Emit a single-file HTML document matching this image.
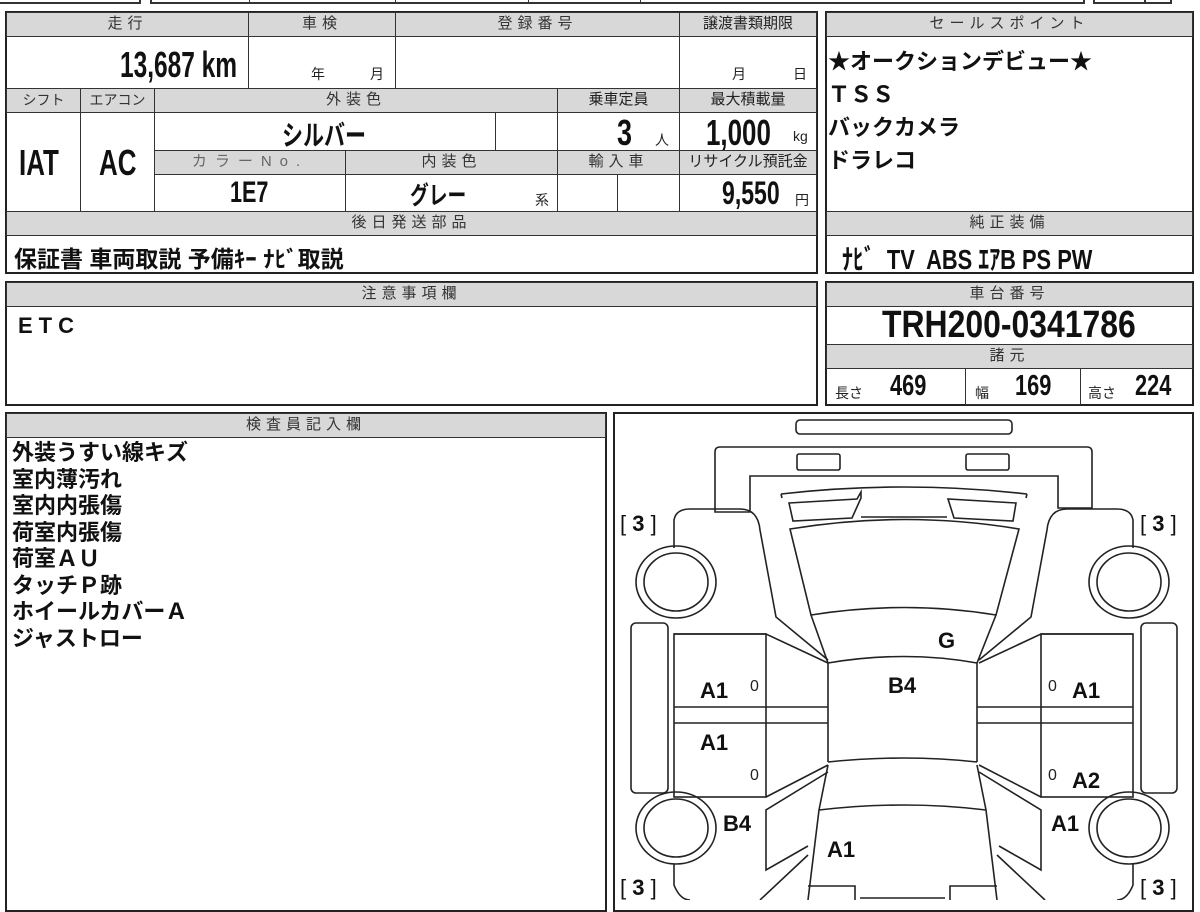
<!DOCTYPE html>
<html><head><meta charset="utf-8"><style>
body{margin:0;width:1200px;height:900px;overflow:hidden;background:#fff;position:relative;font-family:"Liberation Sans","Noto Sans CJK JP",sans-serif;}
.b{position:absolute;border:2px solid #222;box-sizing:border-box;}
.c{position:absolute;box-sizing:border-box;border:1px solid #333;}
.h{position:absolute;box-sizing:border-box;background:#d8d8d8;border:1px solid #333;color:#333;font-size:15px;text-align:center;letter-spacing:5px;line-height:22px;}
.t{position:absolute;font-weight:bold;color:#111;white-space:nowrap;}
.n{transform-origin:left top;}
.s{position:absolute;font-size:14px;color:#222;}
</style></head><body>
<div class="c" style="left:-2px;top:-5px;width:143px;height:9px;border-width:2px"></div>
<div class="c" style="left:150px;top:-5px;width:935px;height:9px;border-width:2px"></div>
<div class="c" style="left:249px;top:-5px;width:147px;height:9px"></div>
<div class="c" style="left:528px;top:-5px;width:113px;height:9px"></div>
<div class="c" style="left:1093px;top:-5px;width:79px;height:9px;border-width:2px"></div>
<div class="c" style="left:1144px;top:-5px;width:1px;height:9px"></div>

<div class="b" style="left:5px;top:11px;width:813px;height:263px"></div>
<div class="h" style="left:6px;top:12px;width:243px;height:25px">走行</div>
<div class="h" style="left:248px;top:12px;width:148px;height:25px">車検</div>
<div class="h" style="left:395px;top:12px;width:285px;height:25px">登録番号</div>
<div class="h" style="left:679px;top:12px;width:138px;height:25px;letter-spacing:0;color:#222">譲渡書類期限</div>
<div class="c" style="left:248px;top:36px;width:148px;height:53px"></div>
<div class="c" style="left:395px;top:36px;width:285px;height:53px"></div>
<div class="t n" style="left:120px;top:44px;font-size:36px;transform:scaleX(0.68)">13,687 km</div>
<div class="s" style="left:311px;top:64px">年</div><div class="s" style="left:370px;top:64px">月</div>
<div class="s" style="left:732px;top:64px">月</div><div class="s" style="left:793px;top:64px">日</div>

<div class="h" style="left:6px;top:88px;width:75px;height:25px;letter-spacing:0;font-size:14px">シフト</div>
<div class="h" style="left:80px;top:88px;width:75px;height:25px;letter-spacing:0;font-size:14px">エアコン</div>
<div class="h" style="left:154px;top:88px;width:404px;height:25px">外装色</div>
<div class="h" style="left:557px;top:88px;width:123px;height:25px;letter-spacing:0;color:#222">乗車定員</div>
<div class="h" style="left:679px;top:88px;width:138px;height:25px;letter-spacing:0;color:#222">最大積載量</div>
<div class="c" style="left:80px;top:112px;width:75px;height:100px"></div>
<div class="c" style="left:154px;top:112px;width:342px;height:39px"></div>
<div class="c" style="left:495px;top:112px;width:63px;height:39px"></div>
<div class="c" style="left:557px;top:112px;width:123px;height:39px"></div>
<div class="t n" style="left:19px;top:142px;font-size:36px;transform:scaleX(0.72)">IAT</div>
<div class="t n" style="left:99px;top:142px;font-size:36px;transform:scaleX(0.72)">AC</div>
<div class="t n" style="left:282px;top:114px;font-size:28px;transform:scaleX(0.75)">シルバー</div>
<div class="t n" style="left:617px;top:112px;font-size:36px;transform:scaleX(0.75)">3</div><div class="s" style="left:655px;top:130px">人</div>
<div class="t n" style="left:706px;top:112px;font-size:36px;transform:scaleX(0.72)">1,000</div><div class="s" style="left:793px;top:128px">kg</div>
<div class="h" style="left:154px;top:150px;width:192px;height:25px;letter-spacing:8px;color:#666">カラーNo.</div>
<div class="h" style="left:345px;top:150px;width:213px;height:25px">内装色</div>
<div class="h" style="left:557px;top:150px;width:123px;height:25px">輸入車</div>
<div class="h" style="left:679px;top:150px;width:138px;height:25px;letter-spacing:0;color:#222">リサイクル預託金</div>
<div class="c" style="left:154px;top:174px;width:192px;height:38px"></div>
<div class="c" style="left:345px;top:174px;width:213px;height:38px"></div>
<div class="c" style="left:557px;top:174px;width:61px;height:38px"></div>
<div class="c" style="left:617px;top:174px;width:63px;height:38px"></div>
<div class="c" style="left:679px;top:112px;width:138px;height:100px"></div>
<div class="t n" style="left:230px;top:176px;font-size:30px;transform:scaleX(0.72)">1E7</div>
<div class="t n" style="left:410px;top:176px;font-size:25px;transform:scaleX(0.75)">グレー</div>
<div class="s" style="left:535px;top:190px">系</div>
<div class="t n" style="left:722px;top:175px;font-size:32px;transform:scaleX(0.72)">9,550</div><div class="s" style="left:795px;top:190px">円</div>
<div class="h" style="left:6px;top:211px;width:811px;height:25px">後日発送部品</div>
<div class="t" style="left:14px;top:240px;font-size:23px">保証書 車両取説 予備ｷｰ ﾅﾋﾞ取説</div>

<div class="b" style="left:825px;top:11px;width:369px;height:263px"></div>
<div class="h" style="left:826px;top:12px;width:367px;height:25px">セールスポイント</div>
<div class="t" style="left:828px;top:45px;font-size:22px;line-height:33px">★オークションデビュー★<br>ＴＳＳ<br>バックカメラ<br>ドラレコ</div>
<div class="h" style="left:826px;top:211px;width:367px;height:25px">純正装備</div>
<div class="t n" style="left:842px;top:238px;font-size:28px;transform:scaleX(0.78)">ﾅﾋﾞ&nbsp; TV&nbsp; ABS ｴｱB PS PW</div>

<div class="b" style="left:5px;top:281px;width:813px;height:125px"></div>
<div class="h" style="left:6px;top:282px;width:811px;height:25px">注意事項欄</div>
<div class="t" style="left:18px;top:313px;font-size:22px;letter-spacing:6px">ETC</div>

<div class="b" style="left:825px;top:281px;width:369px;height:125px"></div>
<div class="h" style="left:826px;top:282px;width:367px;height:25px">車台番号</div>
<div class="t n" style="left:882px;top:304px;font-size:38px;transform:scaleX(0.84)">TRH200-0341786</div>
<div class="h" style="left:826px;top:344px;width:367px;height:25px">諸元</div>
<div class="c" style="left:965px;top:368px;width:116px;height:37px"></div>
<div class="s" style="left:835px;top:383px">長さ</div><div class="t n" style="left:890px;top:370px;font-size:29px;transform:scaleX(0.75)">469</div>
<div class="s" style="left:975px;top:383px">幅</div><div class="t n" style="left:1015px;top:370px;font-size:29px;transform:scaleX(0.75)">169</div>
<div class="s" style="left:1088px;top:383px">高さ</div><div class="t n" style="left:1135px;top:370px;font-size:29px;transform:scaleX(0.75)">224</div>

<div class="b" style="left:5px;top:412px;width:602px;height:500px"></div>
<div class="h" style="left:6px;top:413px;width:600px;height:25px">検査員記入欄</div>
<div class="t" style="left:12px;top:440px;font-size:22px;line-height:26.5px">外装うすい線キズ<br>室内薄汚れ<br>室内内張傷<br>荷室内張傷<br>荷室ＡＵ<br>タッチＰ跡<br>ホイールカバーＡ<br>ジャストロー</div>

<div class="b" style="left:613px;top:412px;width:581px;height:500px"></div>
<svg style="position:absolute;left:0;top:0" width="1200" height="900" fill="none" stroke="#222" stroke-width="1.6">
<rect x="796" y="420" width="216" height="14" rx="4"/>
<path d="M715,512 L715,452 Q715,447 720,447 L1087,447 Q1092,447 1092,452 L1092,508 L1058,508 L1058,476 L750,476 L750,512 Z"/>
<rect x="797" y="454" width="43" height="16" rx="2"/><rect x="966" y="454" width="43" height="16" rx="2"/>
<path d="M781,494 Q905,480 1027,494 M781,494 L782,498 M1027,494 L1026,498"/>
<path d="M789,503 L857,499 L861,492 L861,498 L852,518 L793,521 Z"/>
<path d="M1016,503 L948,499 L954,518 L1013,521 Z"/>
<path d="M861,517 L947,517"/>
<path d="M790,529 Q905,510 1019,529 L996,615 Q905,600 811,615 Z"/>
<path d="M811,615 L828,663 Q905,650 977,663 L996,615"/>
<path d="M828,663 L828,762 M977,663 L977,762 M828,762 Q905,754 977,762"/>
<path d="M674,548 L674,520 Q676,509 690,509 L740,509 Q758,509 760,530 L776,617 L828,660"/>
<path d="M1133,548 L1133,520 Q1131,509 1117,509 L1067,509 Q1049,509 1047,530 L1031,617 L979,660"/>
<path d="M674,634 L766,634 L828,663 M1133,634 L1041,634 L979,663"/>
<rect x="674" y="634" width="92" height="163"/><rect x="1041" y="634" width="92" height="163"/>
<path d="M674,707 L828,707 M674,723 L828,723 M977,707 L1133,707 M977,723 L1133,723"/>
<path d="M766,797 L828,765 M1041,797 L979,765"/>
<rect x="631" y="623" width="37" height="170" rx="5"/><rect x="1141" y="623" width="36" height="170" rx="5"/>
<ellipse cx="676" cy="582" rx="40" ry="36"/><ellipse cx="676" cy="582" rx="32" ry="29"/>
<ellipse cx="1129" cy="582" rx="40" ry="36"/><ellipse cx="1129" cy="582" rx="32" ry="29"/>
<ellipse cx="676" cy="828" rx="40" ry="36"/><ellipse cx="676" cy="828" rx="32" ry="29"/>
<ellipse cx="1129" cy="828" rx="40" ry="36"/><ellipse cx="1129" cy="828" rx="32" ry="29"/>
<path d="M828,772 L766,810 L766,870 L808,846 M979,772 L1041,810 L1041,870 L999,846"/>
<path d="M828,765 L819,810 L808,900 M977,765 L986,810 L997,900 M819,810 Q905,800 986,810"/>
<path d="M674,864 L674,885 Q680,900 690,900 M1133,864 L1133,885 Q1127,900 1117,900 M808,855 L760,900 M997,855 L1045,900"/>
<path d="M808,886 L855,886 L855,900 M997,886 L950,886 L950,900 M860,898 L945,898"/>
</svg>
<div class="t" style="left:620px;top:511px;font-size:22px;font-weight:normal">[ <b>3</b> ]</div>
<div class="t" style="left:1140px;top:511px;font-size:22px;font-weight:normal">[ <b>3</b> ]</div>
<div class="t" style="left:620px;top:875px;font-size:22px;font-weight:normal">[ <b>3</b> ]</div>
<div class="t" style="left:1140px;top:875px;font-size:22px;font-weight:normal">[ <b>3</b> ]</div>
<div class="t" style="left:938px;top:628px;font-size:22px">G</div>
<div class="t" style="left:888px;top:673px;font-size:22px">B4</div>
<div class="t" style="left:700px;top:678px;font-size:22px">A1</div>
<div class="t" style="left:1072px;top:678px;font-size:22px">A1</div>
<div class="t" style="left:700px;top:730px;font-size:22px">A1</div>
<div class="t" style="left:1072px;top:768px;font-size:22px">A2</div>
<div class="t" style="left:723px;top:811px;font-size:22px">B4</div>
<div class="t" style="left:1051px;top:811px;font-size:22px">A1</div>
<div class="t" style="left:827px;top:837px;font-size:22px">A1</div>
<div class="s" style="left:750px;top:678px;font-size:16px">0</div>
<div class="s" style="left:1048px;top:678px;font-size:16px">0</div>
<div class="s" style="left:750px;top:767px;font-size:16px">0</div>
<div class="s" style="left:1048px;top:767px;font-size:16px">0</div>
</body></html>
